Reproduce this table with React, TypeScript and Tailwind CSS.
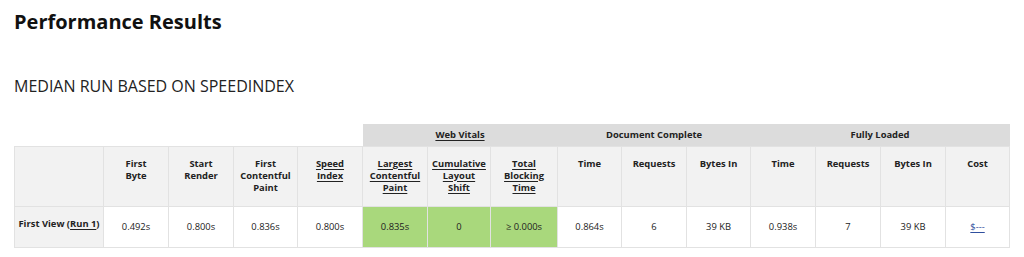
import React from 'react';

const cols = [89, 65, 65, 64, 65, 65, 63, 67, 64, 65, 64, 65, 65, 65, 64];

function U({ children }: { children: React.ReactNode }) {
  return <span className="underline decoration-1 underline-offset-2">{children}</span>;
}

const headers: { label: React.ReactNode }[] = [
  { label: '' },
  { label: <>First<br />Byte</> },
  { label: <>Start<br />Render</> },
  { label: <>First<br />Contentful<br />Paint</> },
  { label: <U>Speed<br />Index</U> },
  { label: <U>Largest<br />Contentful<br />Paint</U> },
  { label: <U>Cumulative<br />Layout<br />Shift</U> },
  { label: <U>Total<br />Blocking<br />Time</U> },
  { label: 'Time' },
  { label: 'Requests' },
  { label: 'Bytes In' },
  { label: 'Time' },
  { label: 'Requests' },
  { label: 'Bytes In' },
  { label: 'Cost' },
];

// data cells after the row label, columns 1..13
const values = ['0.492s', '0.800s', '0.836s', '0.800s', '0.835s', '0', '\u2265 0.000s', '0.864s', '6', '39 KB', '0.938s', '7', '39 KB'];
const green = [5, 6, 7];

export default function App() {
  return (
    <div className="w-[1024px] h-[257px] bg-white text-[#222] overflow-hidden" style={{ fontFamily: '"Open Sans", sans-serif' }}>
      <div className="px-[14px] pt-[10px]">
        <h1 className="text-[20px] leading-[24px] font-bold text-[#111]">Performance Results</h1>
        <h2 className="mt-[42px] text-[16px] leading-[20px] text-[#222]">MEDIAN RUN BASED ON SPEEDINDEX</h2>
        <table className="mt-[28px] border-collapse table-fixed text-[9.4px] leading-[12px] text-[#222]" style={{ width: 995 }}>
          <colgroup>
            {cols.map((w, i) => (
              <col key={i} style={{ width: w }} />
            ))}
          </colgroup>
          <thead>
            <tr className="h-[22px]">
              <th colSpan={5} className="bg-white"></th>
              <th colSpan={3} className="bg-[#dcdcdc] font-bold text-center align-middle">
                <U>Web Vitals</U>
              </th>
              <th colSpan={3} className="bg-[#dcdcdc] font-bold text-center align-middle">Document Complete</th>
              <th colSpan={4} className="bg-[#dcdcdc] font-bold text-center align-middle">Fully Loaded</th>
            </tr>
            <tr className="h-[60px]">
              {headers.map((h, i) => (
                <th key={i} className="bg-[#f2f2f2] border border-[#e2e2e2] font-bold text-center align-top pt-[11px] px-0">
                  {h.label}
                </th>
              ))}
            </tr>
          </thead>
          <tbody>
            <tr className="h-[41px]">
              <td className="bg-[#f2f2f2] border border-[#e2e2e2] font-bold text-center whitespace-nowrap pb-[5px]">
                First View (<U>Run 1</U>)
              </td>
              {values.map((v, i) => (
                <td
                  key={i}
                  className={`border border-[#e2e2e2] text-center align-middle ${green.includes(i + 1) ? 'bg-[#a9d87c]' : 'bg-white'}`}
                >
                  {v}
                </td>
              ))}
              <td className="border border-[#e2e2e2] text-center align-middle">
                <span className="text-[#2f4f9e] underline decoration-1 underline-offset-2">$---</span>
              </td>
            </tr>
          </tbody>
        </table>
      </div>
    </div>
  );
}
